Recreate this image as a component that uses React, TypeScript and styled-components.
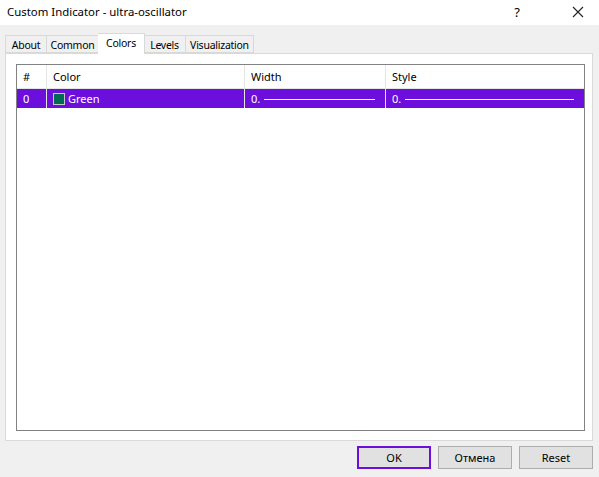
import styled, { createGlobalStyle } from "styled-components";

const GlobalStyle = createGlobalStyle`
  html, body {
    margin: 0;
    padding: 0;
    background: #f0f0f0;
  }
  * {
    box-sizing: border-box;
  }
`;

const tabs = [
  { label: "About", w: 42 },
  { label: "Common", w: 52 },
  { label: "Colors", w: 47 },
  { label: "Levels", w: 42 },
  { label: "Visualization", w: 68 },
];

const App = () => {
  return (
    <Window>
      <GlobalStyle />
      <TitleBar>
        <span>Custom Indicator - ultra-oscillator</span>
        <TitleButtons>
          <span className="help">?</span>
          <svg width="12" height="12" viewBox="0 0 12 12">
            <path d="M1 1 L11 11 M11 1 L1 11" stroke="#222" strokeWidth="1.1" />
          </svg>
        </TitleButtons>
      </TitleBar>

      <Body>
        <TabStrip>
          {tabs.map((t) => (
            <Tab key={t.label} $w={t.w} $active={t.label === "Colors"}>
              {t.label}
            </Tab>
          ))}
        </TabStrip>

        <Panel>
          <List>
            <HeaderRow>
              <Cell $w={30}>#</Cell>
              <Cell $w={198}>Color</Cell>
              <Cell $w={141}>Width</Cell>
              <Cell $last>Style</Cell>
            </HeaderRow>
            <DataRow>
              <Cell $w={30}>0</Cell>
              <Cell $w={198}>
                <Swatch />
                Green
              </Cell>
              <Cell $w={141}>
                0.
                <LineSample />
              </Cell>
              <Cell $last>
                0.
                <LineSample />
              </Cell>
            </DataRow>
          </List>
        </Panel>

        <Footer>
          <Button $primary>OK</Button>
          <Button>Отмена</Button>
          <Button>Reset</Button>
        </Footer>
      </Body>
      <Grip />
    </Window>
  );
};

export default App;

const Window = styled.div`
  position: relative;
  width: 599px;
  height: 477px;
  display: flex;
  flex-direction: column;
  background: #f0f0f0;
  font-family: "Noto Sans", "Open Sans", sans-serif;
  font-size: 11px;
  color: #000;
`;

const TitleBar = styled.div`
  height: 25px;
  background: #fff;
  display: flex;
  align-items: center;
  justify-content: space-between;
  padding: 0 15px 2px 7px;
  font-size: 11.4px;
  color: #000;
`;

const TitleButtons = styled.div`
  display: flex;
  align-items: center;
  gap: 52px;

  .help {
    font-size: 13px;
  }
`;

const Body = styled.div`
  flex: 1;
  display: flex;
  flex-direction: column;
  padding: 8px 6px 8px 5px;
`;

const TabStrip = styled.div`
  display: flex;
  align-items: flex-end;
  height: 20px;
`;

const Tab = styled.div<{ $active?: boolean; $w: number }>`
  position: relative;
  z-index: ${(p) => (p.$active ? 1 : 0)};
  width: ${(p) => p.$w}px;
  display: flex;
  align-items: center;
  justify-content: center;
  white-space: nowrap;
  font-size: 10.5px;
  letter-spacing: -0.25px;
  height: ${(p) => (p.$active ? "21px" : "18px")};
  padding: ${(p) => (p.$active ? "0 0 3px" : "1px 0 0")};
  margin: 0 ${(p) => (p.$active ? "-1px" : "0")};
  margin-bottom: ${(p) => (p.$active ? "-1px" : "0")};
  background: ${(p) => (p.$active ? "#fff" : "#f0f0f0")};
  border: 1px solid #d9d9d9;
  border-bottom: ${(p) => (p.$active ? "none" : "1px solid #d9d9d9")};

  & + & {
    border-left: ${(p) => (p.$active ? "1px solid #d9d9d9" : "none")};
  }
`;

const Panel = styled.div`
  height: 388px;
  background: #fff;
  border: 1px solid #d9d9d9;
  padding: 10px 7px 9px 10px;
  display: flex;
`;

const List = styled.div`
  flex: 1;
  border: 1px solid #828282;
  background: #fff;
`;

const HeaderRow = styled.div`
  display: flex;
  height: 24px;
  border-bottom: 1px solid #e5e5e5;
`;

const DataRow = styled.div`
  display: flex;
  height: 19px;
  background: #6c0fdc;
  color: #fff;
`;

const Cell = styled.div<{ $w?: number; $last?: boolean }>`
  ${(p) => (p.$last ? "flex: 1;" : `width: ${p.$w}px;`)}
  display: flex;
  align-items: center;
  padding: 0 6px;
  border-right: ${(p) => (p.$last ? "none" : "1px solid #e5e5e5")};
  white-space: nowrap;
  overflow: hidden;
`;

const Swatch = styled.span`
  width: 12px;
  height: 12px;
  background: #006b55;
  border: 1px solid #c8c8c8;
  margin-right: 3px;
  flex-shrink: 0;
`;

const LineSample = styled.span`
  flex: 1;
  height: 1px;
  background: #fff;
  margin: 1px 4px 0 4px;
`;

const Footer = styled.div`
  display: flex;
  justify-content: flex-end;
  gap: 7px;
  margin-top: 5px;
`;

const Button = styled.div<{ $primary?: boolean }>`
  width: 74px;
  height: 23px;
  display: flex;
  align-items: center;
  justify-content: center;
  background: #e1e1e1;
  border: ${(p) => (p.$primary ? "2px solid #6c0fdc" : "1px solid #adadad")};
  font-size: 11px;
`;

const Grip = styled.div`
  position: absolute;
  right: 1px;
  bottom: 1px;
  width: 4px;
  height: 4px;
  background-image: radial-gradient(#bdbdbd 40%, transparent 41%);
  background-size: 2px 2px;
`;
